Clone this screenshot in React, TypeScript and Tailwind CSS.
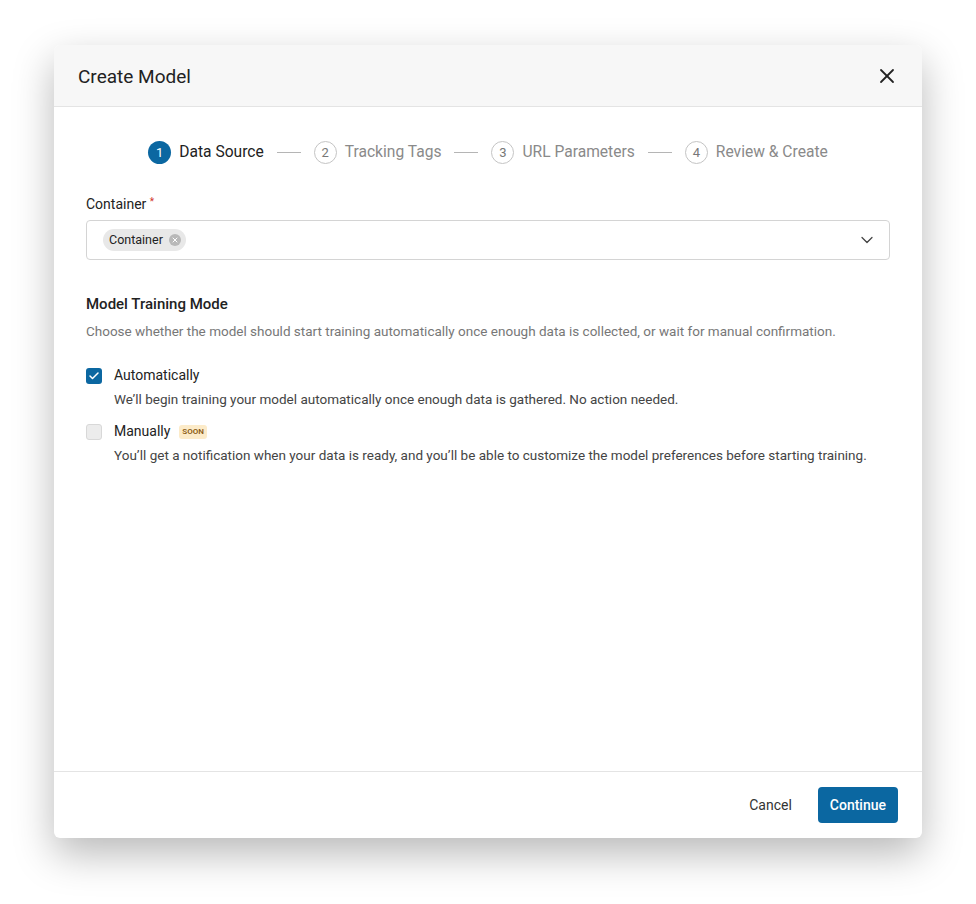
import { X, ChevronDown, Check } from 'lucide-react';

const STEPS = ['Data Source', 'Tracking Tags', 'URL Parameters', 'Review & Create'];

function Stepper() {
  return (
    <div className="flex items-center justify-center gap-[13px] pt-[34px]">
      {STEPS.map((label, i) => (
        <div key={label} className="flex items-center gap-[13px]">
          {i > 0 && <div className="h-px w-6 bg-[#b5b5b5]" />}
          <div className="flex items-center gap-2">
            <span
              className={
                i === 0
                  ? 'flex h-[23px] w-[23px] items-center justify-center rounded-full bg-[#0b67a1] text-[13px] text-white'
                  : 'flex h-[23px] w-[23px] items-center justify-center rounded-full border border-[#c4c4c4] text-[13px] text-[#777]'
              }
            >
              {i + 1}
            </span>
            <span className={i === 0 ? 'text-[15.6px] text-[#222]' : 'text-[15.6px] text-[#8a8a8a]'}>{label}</span>
          </div>
        </div>
      ))}
    </div>
  );
}

export default function App() {
  return (
    <div className="min-h-[904px] bg-white pt-[45px] pl-[54px]" style={{ fontFamily: 'Roboto, "Noto Sans", sans-serif' }}>
      <div className="flex h-[793px] w-[868px] flex-col overflow-hidden rounded-md bg-white shadow-[0_16px_40px_rgba(0,0,0,0.28)]">
        <div className="flex h-[62px] shrink-0 items-center justify-between border-b border-[#e4e4e4] bg-[#f7f7f7] px-6">
          <h2 className="mt-[3px] text-[19px] text-[#222]">Create Model</h2>
          <X className="mr-[-1px] h-6 w-6 text-[#222]" strokeWidth={1.8} />
        </div>

        <div className="flex-1 px-8">
          <Stepper />

          <div className="mt-[28px]">
            <label className="text-[14px] text-[#222]">
              Container <span className="relative top-[-4px] text-[10px] text-[#d0342c]">*</span>
            </label>
            <div className="mt-[4px] flex h-10 items-center justify-between rounded border border-[#d4d4d4] px-4">
              <span className="flex h-[22px] items-center gap-1.5 rounded-full bg-[#e8e8e8] pl-[6px] pr-[5px] text-[12.5px] text-[#222]">
                Container
                <span className="flex h-3 w-3 items-center justify-center rounded-full bg-[#b8b8b8]">
                  <X className="h-2 w-2 text-white" strokeWidth={3} />
                </span>
              </span>
              <ChevronDown className="mr-[-4px] h-5 w-5 text-[#444]" strokeWidth={1.5} />
            </div>
          </div>

          <h3 className="mt-[33px] text-[15px] font-medium text-[#222]">Model Training Mode</h3>
          <p className="mt-[5px] text-[13.5px] text-[#777]">
            Choose whether the model should start training automatically once enough data is collected, or wait for manual confirmation.
          </p>

          <div className="mt-[24px] flex flex-col gap-[12px]">
            <div>
              <div className="flex items-center gap-3">
                <span className="flex h-4 w-4 items-center justify-center rounded-[3px] bg-[#0b67a1]">
                  <Check className="h-3 w-3 text-white" strokeWidth={3} />
                </span>
                <span className="text-[14px] text-[#222]">Automatically</span>
              </div>
              <p className="mt-[3px] pl-7 text-[13.5px] text-[#444]">
                We’ll begin training your model automatically once enough data is gathered. No action needed.
              </p>
            </div>
            <div>
              <div className="flex items-center gap-3">
                <span className="h-4 w-4 rounded-[3px] border border-[#d8d8d8] bg-[#ececec]" />
                <div className="flex items-center gap-[9px]">
                  <span className="text-[14px] text-[#222]">Manually</span>
                  <span className="rounded-[3px] bg-[#fcebc9] px-[3px] py-[1px] text-[8px] font-semibold text-[#8a5a12]">SOON</span>
                </div>
              </div>
              <p className="mt-[3px] pl-7 text-[13.5px] text-[#444]">
                You’ll get a notification when your data is ready, and you’ll be able to customize the model preferences before starting training.
              </p>
            </div>
          </div>
        </div>

        <div className="flex h-[67px] shrink-0 items-center justify-end gap-[10px] border-t border-[#e4e4e4] px-6">
          <button className="px-4 py-2 text-[14px] text-[#333]">Cancel</button>
          <button className="h-9 rounded bg-[#0b67a1] px-3 text-[14px] font-medium text-white">Continue</button>
        </div>
      </div>
    </div>
  );
}
